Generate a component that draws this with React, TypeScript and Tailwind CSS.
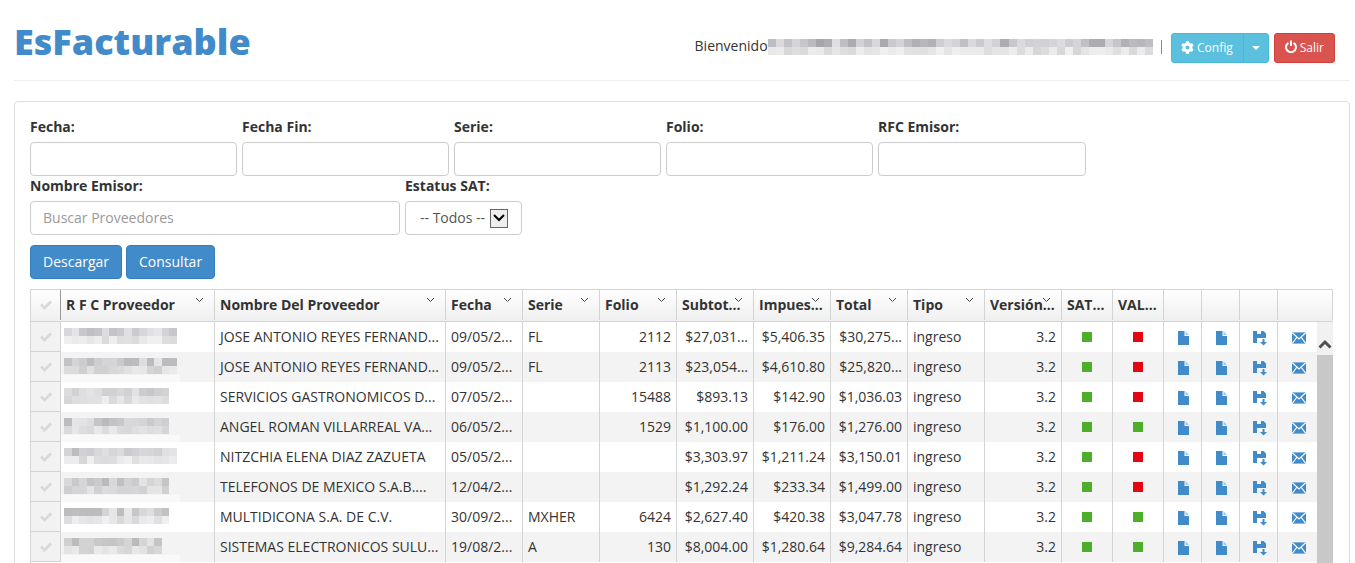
import { FC } from "react";
import { FaCog } from "react-icons/fa";

const font = "font-['Open_Sans',sans-serif]";

// mosaico gris de los datos ocultos
const mosaic = (seed: number, n: number) => {
    const out: string[] = [];
    let s = seed;
    for (let i = 0; i < n; i++) {
        s = (s * 9301 + 49297) % 233280;
        const v = 165 + Math.floor((s / 233280) * 60);
        out.push(`rgb(${v},${v},${v + 3})`);
    }
    return out;
};

const Pixels: FC<{ seed: number; cols: number; w: number; h: number; light?: boolean }> = ({ seed, cols, w, h, light }) => {
    const top = mosaic(seed, cols);
    const bottom = mosaic(seed + 7, cols);
    return (
        <div>
            <div className="flex">
                {top.map((c, i) => <div key={i} style={{ background: c, width: w, height: h, opacity: light ? 0.75 : 1 }} />)}
            </div>
            <div className="flex opacity-45">
                {bottom.map((c, i) => <div key={i} style={{ background: c, width: w, height: h }} />)}
            </div>
        </div>
    );
};

const Check = () => (
    <svg width="14" height="12" viewBox="0 0 14 12"><path d="M1 6.5 L3 4.5 L5.5 7 L11 1.5 L13 3.5 L5.5 11 Z" fill="#d9d9d9" /></svg>
);

const Chevron = () => (
    <svg width="9" height="6" viewBox="0 0 9 6"><path d="M1 1 L4.5 4.5 L8 1" fill="none" stroke="#444" strokeWidth="1" /></svg>
);

const FileIcon = () => (
    <svg width="11" height="14" viewBox="0 0 11 14" className="ml-[2px] mt-0.5"><path d="M0 0 H6.5 V5 H11 V14 H0 Z" fill="#428bca" /><path d="M7.5 0 L11 4 H7.5 Z" fill="#a9c9e5" /></svg>
);

const SaveIcon = () => (
    <svg width="15" height="15" viewBox="0 0 15 15" className="ml-[4px] mt-0.5">
        <path d="M0 0 H4 V3 H8 V0 H10.5 L13 2.5 V7 H4 V12 H0 Z" fill="#428bca" />
        <path d="M9.5 8 H11.5 V11 H14 L10.5 14.5 L7 11 H9.5 Z" fill="#428bca" />
    </svg>
);

const MailIcon = () => (
    <svg width="14" height="12" viewBox="0 0 15 12" className="ml-[2px] mt-0.5">
        <rect width="15" height="12" fill="#428bca" />
        <path d="M0.3 0.3 L7.5 7 L14.7 0.3 M0.3 11.7 L5.2 5.2 M14.7 11.7 L9.8 5.2" fill="none" stroke="#fff" strokeWidth="1.2" />
    </svg>
);

const Field: FC<{ label: string; className: string }> = ({ label, className }) => (
    <div className={className}>
        <label className="block h-[25px] text-sm font-bold leading-5 text-[#333]">{label}</label>
        <input className="block h-[34px] w-full rounded border border-[#ccc] bg-white" />
    </div>
);

const widths = ["w-[154px]", "w-[231px]", "w-[77px]", "w-[77px]", "w-[77px]", "w-[77px]", "w-[77px]", "w-[77px]", "w-[77px]", "w-[77px]", "w-[51px]", "w-[51px]", "w-[38px]", "w-[38px]", "w-[38px]"];

const headers = ["R F C Proveedor", "Nombre Del Proveedor", "Fecha", "Serie", "Folio", "Subtot...", "Impues...", "Total", "Tipo", "Versión...", "SAT...", "VAL..."];

const rows = [
    { seed: 11, cols: 15, nombre: "JOSE ANTONIO REYES FERNAND...", fecha: "09/05/2...", serie: "FL", folio: "2112", sub: "$27,031...", imp: "$5,406.35", tot: "$30,275...", sat: true, val: false },
    { seed: 25, cols: 15, nombre: "JOSE ANTONIO REYES FERNAND...", fecha: "09/05/2...", serie: "FL", folio: "2113", sub: "$23,054...", imp: "$4,610.80", tot: "$25,820...", sat: true, val: false },
    { seed: 38, cols: 14, nombre: "SERVICIOS GASTRONOMICOS D...", fecha: "07/05/2...", serie: "", folio: "15488", sub: "$893.13", imp: "$142.90", tot: "$1,036.03", sat: true, val: false },
    { seed: 47, cols: 14, nombre: "ANGEL ROMAN VILLARREAL VA...", fecha: "06/05/2...", serie: "", folio: "1529", sub: "$1,100.00", imp: "$176.00", tot: "$1,276.00", sat: true, val: true },
    { seed: 59, cols: 15, nombre: "NITZCHIA ELENA DIAZ ZAZUETA", fecha: "05/05/2...", serie: "", folio: "", sub: "$3,303.97", imp: "$1,211.24", tot: "$3,150.01", sat: true, val: false },
    { seed: 63, cols: 14, nombre: "TELEFONOS DE MEXICO S.A.B....", fecha: "12/04/2...", serie: "", folio: "", sub: "$1,292.24", imp: "$233.34", tot: "$1,499.00", sat: true, val: false },
    { seed: 71, cols: 14, nombre: "MULTIDICONA S.A. DE C.V.", fecha: "30/09/2...", serie: "MXHER", folio: "6424", sub: "$2,627.40", imp: "$420.38", tot: "$3,047.78", sat: true, val: true },
    { seed: 83, cols: 13, nombre: "SISTEMAS ELECTRONICOS SULU...", fecha: "19/08/2...", serie: "A", folio: "130", sub: "$8,004.00", imp: "$1,280.64", tot: "$9,284.64", sat: true, val: true },
];

const cell = "flex shrink-0 items-center overflow-hidden whitespace-nowrap border-r border-[#d4d4d4] px-[5px] text-sm text-[#333]";

const Dot: FC<{ ok: boolean }> = ({ ok }) => (
    <div className={ok ? "h-2.5 w-2.5 bg-[#4cae2a]" : "h-2.5 w-2.5 bg-[#e30613]"} />
);

const App: FC = () => {
    return (
        <div className={`${font} h-[563px] w-[1355px] overflow-hidden bg-white text-[#333]`}>
            <div className="ml-3.5 mr-[5px] flex h-[81px] items-start justify-between border-b border-[#eee] pr-[15px]">
                <h1 className="mt-[17px] text-[36px] font-extrabold leading-[50px] text-[#428bca]">EsFacturable</h1>
                <div className="mt-[33px] flex items-center">
                    <span className="-mt-1 text-sm leading-[26px] text-[#333]">Bienvenido</span>
                    <div className="-mt-[3px]"><Pixels seed={5} cols={48} w={8.04} h={8} /></div>
                    <span className="-mt-[2px] ml-[8px] mr-[9px] h-3.5 w-px bg-[#7d8a99]" />
                    <div className="flex h-[30px] rounded-[3px] border border-[#46b8da] bg-[#5bc0de] text-xs leading-7 text-white">
                        <div className="flex items-center gap-[3px] border-r border-[#46b8da] pl-[9px] pr-2.5"><FaCog className="-mt-px text-[13px]" />Config</div>
                        <div className="flex w-[24px] items-center justify-center"><span className="border-x-4 border-t-4 border-x-transparent border-t-white" /></div>
                    </div>
                    <div className="ml-[5px] flex h-[30px] items-center gap-[3px] rounded-[3px] border border-[#d43f3a] bg-[#d9534f] px-2.5 text-xs text-white">
                        <svg width="12" height="13" viewBox="0 0 12 13" className="-mt-[3px]"><path d="M3.5 2.8 A5 5 0 1 0 8.5 2.8" fill="none" stroke="#fff" strokeWidth="2" /><path d="M6 0.5 V6" stroke="#fff" strokeWidth="2" /></svg>
                        Salir
                    </div>
                </div>
            </div>

            <div className="ml-3.5 mr-[5px] mt-5 rounded border border-[#ddd] pl-[15px] pr-[16px] pt-[15px]">
                <div className="flex gap-[5px]">
                    <Field label="Fecha:" className="w-[207px]" />
                    <Field label="Fecha Fin:" className="w-[207px]" />
                    <Field label="Serie:" className="w-[207px]" />
                    <Field label="Folio:" className="w-[207px]" />
                    <Field label="RFC Emisor:" className="w-[208px]" />
                </div>
                <div className="flex gap-[5px]">
                    <div className="w-[370px]">
                        <label className="block h-[25px] text-sm font-bold leading-5 text-[#333]">Nombre Emisor:</label>
                        <input placeholder="Buscar Proveedores" className="block h-[34px] w-full rounded border border-[#ccc] bg-white px-3 pb-[2px] text-sm placeholder:text-[#999]" />
                    </div>
                    <div className="w-[117px]">
                        <label className="block h-[25px] text-sm font-bold leading-5 text-[#333]">Estatus SAT:</label>
                        <div className="flex h-[34px] items-center rounded border border-[#ccc] pl-3.5 text-sm text-[#555]">
                            -- Todos --
                            <span className="ml-[5px] flex h-[19px] w-[18px] items-center justify-center border border-[#666] bg-[#eee]">
                                <svg width="12" height="8" viewBox="0 0 12 8"><path d="M1 1 L6 6 L11 1" fill="none" stroke="#000" strokeWidth="2" /></svg>
                            </span>
                        </div>
                    </div>
                </div>
                <div className="mt-2.5 flex gap-1">
                    <button className="h-[34px] rounded border border-[#357ebd] bg-[#428bca] px-3 text-sm text-white">Descargar</button>
                    <button className="h-[34px] rounded border border-[#357ebd] bg-[#428bca] px-3 text-sm text-white">Consultar</button>
                </div>

                <div className="mt-2.5 border border-r-0 border-[#d4d4d4]">
                    <div className="flex h-[32px] border-b border-[#d4d4d4] bg-gradient-to-b from-white to-[#efefef] pb-px">
                        <div className="flex w-[30px] shrink-0 items-center justify-center border-r border-[#999]"><Check /></div>
                        {headers.map((h, i) => (
                            <div key={h} className={`${cell} ${widths[i]} relative font-bold`}>
                                <span>{h}</span>
                                {i < 10 && <span className="absolute right-[10px] top-[7px] flex"><Chevron /></span>}
                            </div>
                        ))}
                        {[0, 1, 2].map((i) => <div key={i} className={`${cell} ${widths[i + 12]}`} />)}
                        <div className="flex-1 border-r border-[#d4d4d4]" />
                    </div>
                    <div className="flex">
                        <div className="min-w-0 flex-1">
                            {rows.map((r, i) => (
                                <div key={r.seed} className={i % 2 ? "flex h-[30px] bg-[#f3f3f3]" : "flex h-[30px] bg-white"}>
                                    <div className="flex w-[30px] shrink-0 items-center justify-center border-r border-b border-[#d4d4d4] bg-[#f2f2f2]"><Check /></div>
                                    <div className={`${cell} ${widths[0]} relative !px-[3px]`}>
                                        {i % 2 === 1 && <div className="absolute bottom-0 left-0 h-[7px] w-[119px] bg-[#f9f9f9]" />}
                                        <div className="relative -mt-[2px]"><Pixels seed={r.seed} cols={r.cols} w={7.5} h={8} light /></div>
                                    </div>
                                    <div className={`${cell} ${widths[1]}`}>{r.nombre}</div>
                                    <div className={`${cell} ${widths[2]}`}>{r.fecha}</div>
                                    <div className={`${cell} ${widths[3]}`}>{r.serie}</div>
                                    <div className={`${cell} ${widths[4]} justify-end`}>{r.folio}</div>
                                    <div className={`${cell} ${widths[5]} justify-end`}>{r.sub}</div>
                                    <div className={`${cell} ${widths[6]} justify-end`}>{r.imp}</div>
                                    <div className={`${cell} ${widths[7]} justify-end`}>{r.tot}</div>
                                    <div className={`${cell} ${widths[8]}`}>ingreso</div>
                                    <div className={`${cell} ${widths[9]} justify-end`}>3.2</div>
                                    <div className={`${cell} ${widths[10]} justify-center`}><Dot ok={r.sat} /></div>
                                    <div className={`${cell} ${widths[11]} justify-center`}><Dot ok={r.val} /></div>
                                    <div className={`${cell} ${widths[12]} justify-center`}><FileIcon /></div>
                                    <div className={`${cell} ${widths[13]} justify-center`}><FileIcon /></div>
                                    <div className={`${cell} ${widths[14]} justify-center`}><SaveIcon /></div>
                                    <div className="flex min-w-0 flex-1 items-center justify-center"><MailIcon /></div>
                                </div>
                            ))}
                        </div>
                        <div className="w-4 shrink-0 bg-[#f1f1f1]">
                            <div className="flex h-[33px] items-end justify-center pb-[6px]">
                                <svg width="14" height="10" viewBox="0 0 14 10"><path d="M1.5 8.5 L7 3 L12.5 8.5" fill="none" stroke="#505050" strokeWidth="3" /></svg>
                            </div>
                            <div className="h-[400px] bg-[#c8c8c8]" />
                        </div>
                    </div>
                </div>
            </div>
        </div>
    );
};

export default App;
